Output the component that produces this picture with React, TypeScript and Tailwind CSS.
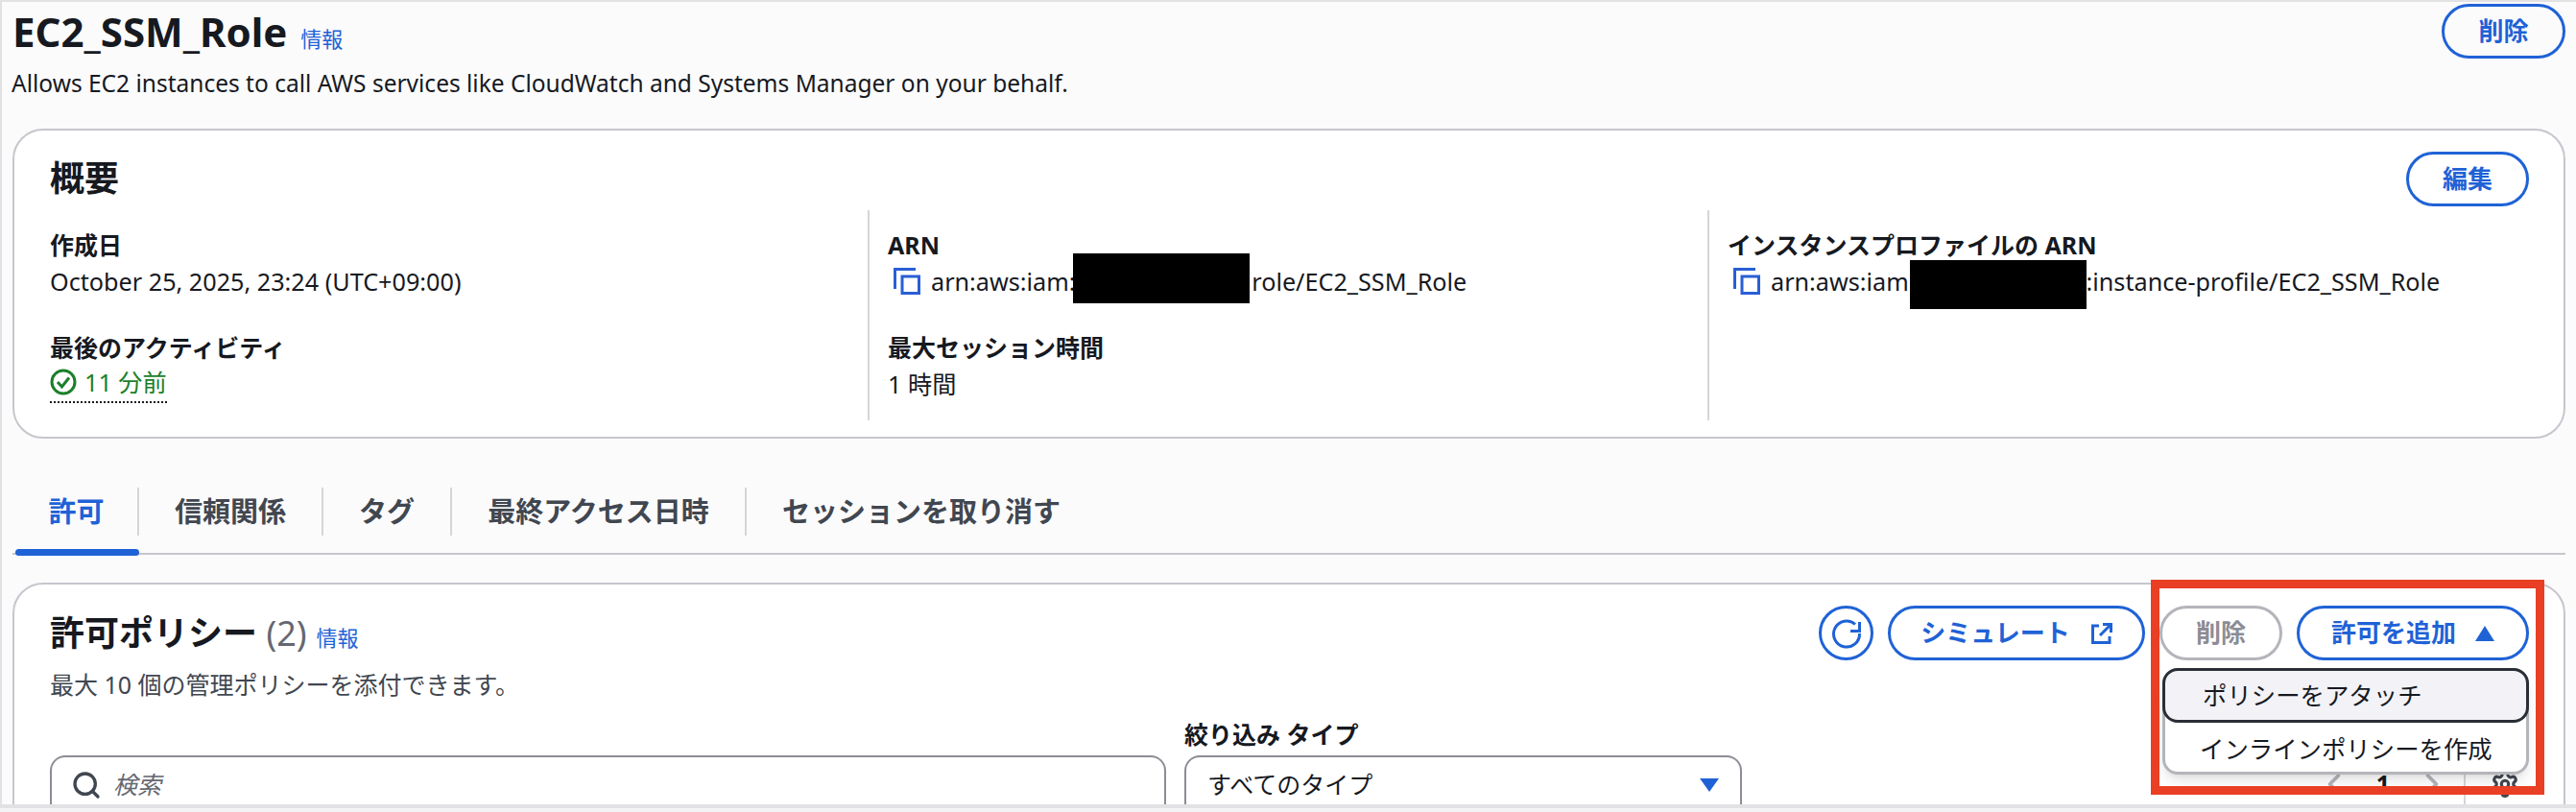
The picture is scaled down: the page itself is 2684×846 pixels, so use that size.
import React from 'react';
import { ChevronLeft, ChevronRight, Search, Settings } from 'lucide-react';

const FONT = "font-['Noto_Sans','Noto_Sans_CJK_JP',sans-serif]";

const CopyIcon = () => (
  <svg width="28" height="28" viewBox="0 0 28 28" fill="none" stroke="#295fd6" className="shrink-0">
    <path d="M1.5 22V1.5H23" strokeWidth="3" />
    <rect x="9" y="9" width="17.5" height="17.5" strokeWidth="3" />
  </svg>
);

const SuccessIcon = () => (
  <svg width="28" height="28" viewBox="0 0 28 28" fill="none" stroke="#1b7f2a" strokeWidth="3" className="shrink-0">
    <circle cx="14" cy="14" r="12" />
    <path d="M8 14l4.5 5L20 9.5" />
  </svg>
);

const Pill = ({ children, className }: { children: React.ReactNode; className: string }) => (
  <button className={`h-[57px] rounded-full border-[3px] border-[#1f62d6] text-[#1f62d6] text-[26px] font-semibold flex items-center justify-center ${className}`}>
    {children}
  </button>
);

const Field = ({ label, children }: { label: string; children: React.ReactNode }) => (
  <div>
    <div className="text-[25px] leading-[38px] font-bold text-[#16191f] whitespace-nowrap">{label}</div>
    <div className="text-[25.2px] leading-[38px] text-[#16191f] whitespace-nowrap">{children}</div>
  </div>
);

const tabs = [
  { label: '許可', width: 'w-[129px]', active: true },
  { label: '信頼関係', width: 'w-[192px]', active: false },
  { label: 'タグ', width: 'w-[134px]', active: false },
  { label: '最終アクセス日時', width: 'w-[307px]', active: false },
  { label: 'セッションを取り消す', width: 'w-[364px]', active: false },
];

export default function App() {
  return (
    <div className={`${FONT} w-[2684px] h-[846px] bg-[#f4f4f6] overflow-hidden`}>
      <div className="relative h-[842px] bg-[#fbfbfc] border-t-2 border-l-2 border-b-4 border-[#e2e2e5] overflow-hidden pl-[11px] pr-[11px]">
        {/* Page header */}
        <div className="flex justify-between h-[132px]">
          <div>
            <div className="flex items-baseline pt-[3px] gap-[14px]">
              <h1 className="text-[42px] leading-[56px] font-bold text-[#16191f]">EC2_SSM_Role</h1>
              <span className="text-[22px] text-[#1f62d6]">情報</span>
            </div>
            <p className="text-[24.5px] leading-[38px] mt-[7px] text-[#16191f] -ml-[1px]">
              Allows EC2 instances to call AWS services like CloudWatch and Systems Manager on your behalf.
            </p>
          </div>
          <Pill className="w-[129px] mt-[2px]">削除</Pill>
        </div>

        {/* Summary */}
        <section className="h-[323px] rounded-[32px] border-2 border-[#c6c6cd] bg-white pl-[37px] pr-[36px]">
          <div className="flex justify-between items-start pt-[22px] h-[83px]">
            <h2 className="text-[36px] leading-[50px] font-bold text-[#16191f] mt-[3px]">概要</h2>
            <Pill className="w-[128px]">編集</Pill>
          </div>
          <div className="grid grid-cols-[852px_875px_1fr] h-[219px]">
            <div className="pt-[17px] flex flex-col gap-[31px]">
              <Field label="作成日">October 25, 2025, 23:24 (UTC+09:00)</Field>
              <Field label="最後のアクティビティ">
                <span className="inline-flex items-center gap-[8px] pb-[3px] text-[#1b7f2a] border-b-2 border-dotted border-[#16191f] leading-[34px]">
                  <SuccessIcon /> 11 分前
                </span>
              </Field>
            </div>
            <div className="border-l-2 border-[#d5d5da] pl-[19px] pt-[17px] flex flex-col gap-[31px]">
              <Field label="ARN">
                <span className="flex items-center gap-[11px] pl-[6px]">
                  <CopyIcon />
                  <span className="flex items-center">
                    arn:aws:iam::
                    <span className="relative top-[-3px] w-[184px] h-[52px] -my-[7px] -ml-[9px] mr-[2px] bg-black" />
                    role/EC2_SSM_Role
                  </span>
                </span>
              </Field>
              <Field label="最大セッション時間">1 時間</Field>
            </div>
            <div className="border-l-2 border-[#d5d5da] pl-[19px] pt-[17px]">
              <Field label="インスタンスプロファイルの ARN">
                <span className="flex items-center gap-[11px] pl-[6px]">
                  <CopyIcon />
                  <span className="flex items-center">
                    arn:aws:iam:
                    <span className="relative top-[3px] w-[184px] h-[51px] -my-[7px] -ml-[6px] bg-black" />
                    :instance-profile/EC2_SSM_Role
                  </span>
                </span>
              </Field>
            </div>
          </div>
        </section>

        {/* Tabs */}
        <div className="mt-[51px] border-b-2 border-[#c6c6cd] h-[70px] flex pl-[3px]">
          {tabs.map(t => (
            <div key={t.label} className={`${t.width} relative h-[70px]`}>
              <div className={`h-[50px] flex items-center justify-center text-[29px] font-semibold ${t.label === 'セッションを取り消す' ? '' : 'border-r-2 border-[#d5d5da]'} ${t.active ? 'text-[#1f62d6]' : 'text-[#414750]'}`}>
                {t.label}
              </div>
              {t.active && <div className="absolute left-0 right-0 bottom-[-1px] h-[7px] rounded-full bg-[#1f62d6]" />}
            </div>
          ))}
        </div>

        {/* Permission policies */}
        <section className="relative mt-[29px] h-[300px] rounded-t-[32px] border-2 border-[#c6c6cd] bg-white pl-[37px] pr-[36px]">
          <div className="flex justify-between items-start pt-[22px]">
            <div>
              <div className="flex items-baseline gap-[10px] mt-[4px]">
                <h2 className="text-[36px] leading-[50px] font-bold text-[#16191f]">
                  許可ポリシー <span className="font-normal text-[#656871]">(2)</span>
                </h2>
                <span className="text-[22px] text-[#1f62d6]">情報</span>
              </div>
              <p className="text-[25px] leading-[38px] text-[#414750] mt-[9px]">最大 10 個の管理ポリシーを添付できます。</p>
            </div>
            <div className="flex gap-[15px]">
              <Pill className="w-[57px]">
                <svg width="36" height="36" viewBox="0 0 36 36" fill="none" stroke="#1f62d6" strokeWidth="3">
                  <path d="M27 8.5A13.5 13.5 0 1 0 31.5 18" />
                  <path d="M31.5 6v9.5H22" />
                </svg>
              </Pill>
              <Pill className="w-[268px] gap-[22px]">
                シミュレート
                <svg width="22" height="22" viewBox="0 0 22 22" fill="none" stroke="#1f62d6" strokeWidth="3">
                  <path d="M8 3H1.5v17.5H19V14" />
                  <path d="M12 1.5h8.5V10M20.5 1.5L9 13" />
                </svg>
              </Pill>
              <button className="w-[128px] h-[57px] rounded-full border-[3px] border-[#b4b4bb] text-[#8c8c94] text-[26px] font-semibold">削除</button>
              <div className="relative">
                <Pill className="w-[242px] gap-[20px]">
                  許可を追加
                  <svg width="20" height="16" viewBox="0 0 20 16" fill="#1f62d6"><path d="M10 0l10 16H0z" /></svg>
                </Pill>
                <div className="absolute z-10 top-[65px] right-0 w-[382px] h-[111px] rounded-[16px] border-[3px] border-[#b4b4bb] bg-white shadow-lg text-[25.4px] text-[#16191f]">
                  <div className="-m-[3px] h-[57px] rounded-[16px] border-[3px] border-[#2a2e36] bg-[#f2f2f7] flex items-center pl-[39px]">ポリシーをアタッチ</div>
                  <div className="h-[54px] mt-[3px] flex items-center pl-[36px]">インラインポリシーを作成</div>
                </div>
              </div>
            </div>
          </div>
          <div className="flex mt-[15px] items-start">
            <div className="w-[1163px] mt-[40px] h-[60px] rounded-t-[16px] border-2 border-b-0 border-[#8c8c94] flex items-center pl-[20px] gap-[12px]">
              <Search size={32} className="text-[#414750]" strokeWidth={2.5} />
              <span className="text-[25px] italic text-[#656871]">検索</span>
            </div>
            <div className="ml-[19px]">
              <div className="text-[25px] leading-[36px] font-bold text-[#16191f]">絞り込み タイプ</div>
              <div className="mt-[4px] w-[581px] h-[60px] rounded-t-[16px] border-2 border-b-0 border-[#8c8c94] flex items-center justify-between px-[22px] text-[25px] text-[#16191f]">
                すべてのタイプ
                <svg width="20" height="14" viewBox="0 0 20 14" fill="#1f62d6"><path d="M0 0h20L10 14z" /></svg>
              </div>
            </div>
            <div className="ml-auto mt-[40px] flex items-center h-[60px] text-[#b4b4bb] pr-[10px]">
              <ChevronLeft size={36} strokeWidth={2.5} />
              <span className="w-[66px] text-center text-[25px] font-bold text-[#16191f]">1</span>
              <ChevronRight size={36} strokeWidth={2.5} />
              <div className="w-[2px] h-[60px] bg-[#d5d5da] ml-[15px] mr-[26px]" />
              <Settings size={30} strokeWidth={2.5} className="text-[#414750]" />
            </div>
          </div>
          <div className="absolute z-20 left-[2226px] top-[-5px] w-[410px] h-[224px] border-[9px] border-[#e93f25] pointer-events-none" />
        </section>
      </div>
    </div>
  );
}
